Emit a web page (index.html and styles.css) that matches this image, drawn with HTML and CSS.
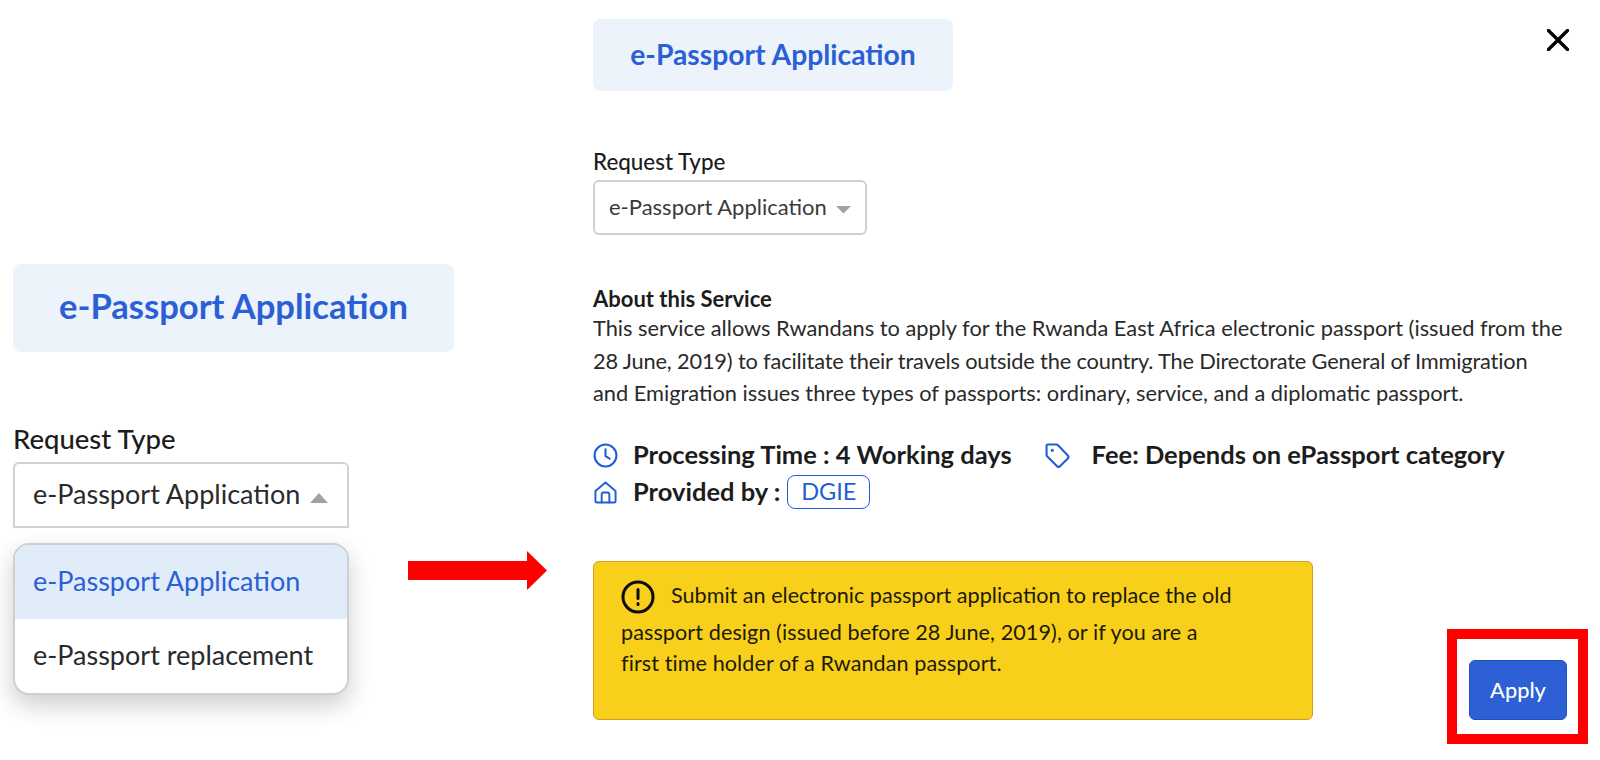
FILE: index.html
```html
<!DOCTYPE html>
<html lang="en">
<head>
<meta charset="utf-8">
<title>e-Passport Application</title>
<link rel="stylesheet" href="styles.css">
</head>
<body>
<div class="page">
  <section class="left">
    <div class="badge badge-lg">e-Passport Application</div>
    <div class="left-row">
      <div class="field-lg">
        <div class="label-lg">Request Type</div>
        <div class="select-lg">
          <span class="select-text">e-Passport Application</span>
          <svg class="caret-lg" viewBox="0 0 18 10"><path d="M9 0 18 10H0Z"/></svg>
        </div>
        <ul class="menu">
          <li class="opt opt-active">e-Passport Application</li>
          <li class="opt">e-Passport replacement</li>
        </ul>
      </div>
      <svg class="arrow" viewBox="0 0 139 39"><path d="M0 10H119V0L139 19.5 119 39V29H0Z"/></svg>
    </div>
  </section>
  <section class="right">
    <div class="badge badge-sm">e-Passport Application</div>
    <div class="label-sm">Request Type</div>
    <div class="select-sm">
      <span class="select-text">e-Passport Application</span>
      <svg class="caret-sm" viewBox="0 0 14 7"><path d="M0 0H14L7 7Z"/></svg>
    </div>
    <h2 class="about-title">About this Service</h2>
    <p class="about">This service allows Rwandans to apply for the Rwanda East Africa electronic passport (issued from the<br><span class="about-tight">28 June, 2019) to facilitate their travels outside the country. The Directorate General of Immigration</span><br>and Emigration issues three types of passports: ordinary, service, and a diplomatic passport.</p>
    <div class="info-row">
      <svg class="ico" viewBox="0 0 24 24"><circle cx="12" cy="12" r="10.5"/><path d="M12 6v6.5l4 2.5"/></svg>
      <span class="info-text">Processing Time : 4 Working days</span>
      <svg class="ico ico-tag" viewBox="0 0 24 24"><path d="M1.5 2.5a1 1 0 0 1 1-1h8.6a2 2 0 0 1 1.4.6l9.4 9.9a2 2 0 0 1 0 2.8l-7.5 7.5a2 2 0 0 1-2.8 0l-9.6-9.6a1.8 1.8 0 0 1-.5-1.3Z"/><circle cx="7" cy="7" r=".6"/></svg>
      <span class="info-text">Fee: Depends on ePassport category</span>
    </div>
    <div class="info-row info-row-2">
      <svg class="ico ico-home" viewBox="0 0 24 24"><path d="M1.5 10.5 12 1.5l10.5 9V21a1.5 1.5 0 0 1-1.5 1.5H3A1.5 1.5 0 0 1 1.5 21Z"/><path d="M8 22.5V14a2 2 0 0 1 2-2h4a2 2 0 0 1 2 2v8.5"/></svg>
      <span class="info-text">Provided by :</span>
      <span class="tag">DGIE</span>
    </div>
    <div class="bottom">
      <div class="alert">
        <div class="alert-lead">
          <svg class="alert-ico" viewBox="0 0 34 34"><circle cx="17" cy="17" r="15"/><path d="M17 9.5v9M17 23.5v1"/></svg>
          <span class="alert-lead-text">Submit an electronic passport application to replace the old</span>
        </div>
        <div class="alert-line alert-line-2">passport design (issued before 28 June, 2019), or if you are a</div>
        <div class="alert-line">first time holder of a Rwandan passport.</div>
      </div>
      <div class="highlight">
        <button class="apply" type="button">Apply</button>
      </div>
    </div>
  </section>
</div>
<button class="close" type="button" aria-label="Close">
  <svg viewBox="0 0 22 22"><path d="M1.5 1.5 20.5 20.5M20.5 1.5 1.5 20.5"/></svg>
</button>
</body>
</html>
```
FILE: styles.css
```css
* { box-sizing: border-box; }
html, body { margin: 0; height: 760px; overflow: hidden; background: #fff; }
body { font-family: "Lato", "Noto Sans", sans-serif; color: #1c1c1c; }
.page { display: flex; height: 760px; }

.badge {
  display: flex; align-items: center; justify-content: center;
  background: #ecf3fb; color: #2a5fd6; font-weight: 700; border-radius: 8px;
  padding-bottom: 3px;
}
.left { width: 593px; padding: 264px 0 0 13px; }
.badge-lg { width: 441px; height: 88px; font-size: 34.6px; padding-bottom: 5px; }
.left-row { display: flex; margin-top: 72px; }
.field-lg { width: 336px; }
.label-lg { height: 30px; line-height: 30px; font-size: 27.5px; font-weight: 500; margin-bottom: 8px; }
.select-lg {
  display: flex; align-items: center; justify-content: space-between;
  width: 336px; height: 66px; padding: 0 19px 0 18px;
  border: 2px solid #d2d2d2; border-radius: 6px 6px 0 0;
  font-size: 27px; color: #2a2a2a;
}
.select-text { padding-bottom: 3px; }
.caret-lg { width: 18px; height: 10px; fill: #a2a2a2; margin-top: 6px; }
.menu {
  list-style: none; margin: 15px 0 0; padding: 0;
  height: 152px; border: 2px solid #cfcfcf; border-radius: 16px; overflow: hidden;
  background: #fff; box-shadow: 0 10px 24px rgba(0,0,0,.2);
}
.opt { height: 74px; padding: 0 0 3px 18px; display: flex; align-items: center; font-size: 27px; color: #2a2a2a; }
.opt-active { background: #e1ecf9; color: #2a5fd6; }
.arrow { width: 139px; height: 39px; fill: #ff0000; margin: 127px 0 0 59px; }

.right { flex: 1; padding-top: 19px; }
.badge-sm { width: 360px; height: 72px; font-size: 28.3px; }
.label-sm { margin-top: 59px; height: 24px; line-height: 24px; font-size: 22.4px; font-weight: 500; }
.select-sm {
  display: flex; align-items: center; justify-content: space-between;
  margin-top: 6px; width: 274px; height: 55px; padding: 0 14px;
  border: 2px solid #cfcfcf; border-radius: 6px;
  font-size: 22px; color: #3a3a3a;
}
.caret-sm { width: 15px; height: 7.5px; fill: #a2a2a2; margin-top: 4px; }
.about-title { margin: 52px 0 0; height: 24px; line-height: 24px; font-size: 22px; font-weight: 700; }
.about { margin: 1px 0 0; font-size: 21.8px; line-height: 32.5px; color: #2a2a2a; }
.about-tight { letter-spacing: -.17px; }
.info-row { display: flex; align-items: center; height: 35px; margin-top: 28px; }
.info-row-2 { margin-top: 2px; }
.ico { width: 25px; height: 25px; fill: none; stroke: #1f5ed8; stroke-width: 2; stroke-linecap: round; stroke-linejoin: round; flex: none; }
.ico-tag { margin-left: 33px; margin-right: 22px; }
.ico-home { width: 23px; height: 23px; margin: 0 1px; }
.info-text { margin-left: 15px; padding-bottom: 2px; font-size: 25.5px; font-weight: 700; }
.ico-tag + .info-text { margin-left: 0; }
.tag {
  margin-left: 7px; width: 83px; height: 34px; padding-bottom: 2px;
  display: flex; align-items: center; justify-content: center;
  border: 1.5px solid #1f5ed8; border-radius: 8px; color: #1f5ed8; font-size: 23.5px;
}
.bottom { display: flex; align-items: flex-start; margin-top: 51px; }
.alert {
  width: 720px; height: 159px; padding: 18px 27px 0;
  background: #f8cf1a; border: 1.5px solid #d99b1a; border-radius: 6px;
  font-size: 21.6px; color: #1c1a08;
}
.alert-lead { display: flex; align-items: center; gap: 16px; height: 34px; }
.alert-lead-text { margin-top: -3px; }
.alert-ico { width: 34px; height: 34px; fill: none; stroke: #0c0c0c; stroke-width: 3; stroke-linecap: round; flex: none; }
.alert-line { height: 31px; line-height: 31px; letter-spacing: .08px; }
.alert-line-2 { margin-top: 3px; }
.highlight {
  margin: 68px 0 0 134px; width: 141px; height: 115px;
  padding: 21px 11px 0 12px; border: 10px solid #ff0000;
}
.apply {
  display: block; width: 98px; height: 60px; border: 1px solid #1e50c4; border-radius: 6px;
  background: #2c60d4; color: #fff; font: 500 21.8px "Lato", sans-serif;
}
.close { position: absolute; left: 1547px; top: 29px; width: 22px; height: 22px; padding: 0; border: 0; background: none; }
.close svg { display: block; width: 22px; height: 22px; fill: none; stroke: #000; stroke-width: 3.4; stroke-linecap: round; }
```
